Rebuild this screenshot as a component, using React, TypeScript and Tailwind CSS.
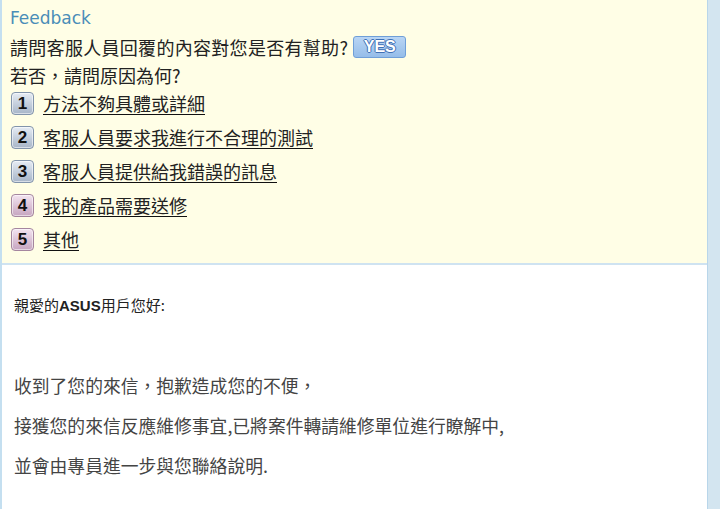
const reasons = [
  { n: 1, text: "方法不夠具體或詳細", tone: "blue" },
  { n: 2, text: "客服人員要求我進行不合理的測試", tone: "blue" },
  { n: 3, text: "客服人員提供給我錯誤的訊息", tone: "blue" },
  { n: 4, text: "我的產品需要送修", tone: "pink" },
  { n: 5, text: "其他", tone: "pink" },
];

function NumberBadge({ n, tone }: { n: number; tone: string }) {
  const cls =
    tone === "blue"
      ? "border-[#8294ab] bg-gradient-to-b from-[#e6ecf4] to-[#a7b5c8]"
      : "border-[#a5869f] bg-gradient-to-b from-[#f3e4f0] to-[#c6a5c0]";
  return (
    <span
      className={`grid h-[23px] w-[23px] place-items-center rounded-[4px] border font-['Liberation_Sans',sans-serif] text-[17px] font-bold leading-none text-[#111] shadow-[inset_0_0_0_1px_rgba(255,255,255,0.55)] ${cls}`}
    >
      {n}
    </span>
  );
}

export default function App() {
  return (
    <div className="flex h-[509px] w-[720px] overflow-hidden bg-[#d3e5f0] font-['Noto_Sans_CJK_TC','Noto_Sans',sans-serif]">
      <div className="flex w-[708px] flex-col border-l-2 border-r border-l-[#c4dff0] border-r-[#b9d6ea]">
        <section className="h-[265px] border-b-2 border-[#cfe3f1] bg-[#fffee6] pl-[8px] pt-[6px]">
          <h2 className="h-[24px] font-['DejaVu_Sans',sans-serif] text-[17px] leading-[24px] text-[#4a8db8]">Feedback</h2>
          <div className="mt-[3px] flex h-[28px] items-center gap-[5px] text-[18px] text-[#222]">
            <span className="tracking-[0.3px]">請問客服人員回覆的內容對您是否有幫助?</span>
            <button
              type="button"
              className="h-[22px] w-[53px] rounded-[3px] border border-[#6f9fd8] bg-gradient-to-b from-[#b9d5f4] to-[#95bde9] font-['Liberation_Sans',sans-serif] text-[16px] font-bold leading-none text-white [text-shadow:1px_0_0_#3f70b5,-1px_0_0_#3f70b5,0_1px_0_#3f70b5,0_-1px_0_#3f70b5]"
            >
              YES
            </button>
          </div>
          <p className="flex h-[28px] items-center text-[18px] text-[#222]">若否，請問原因為何?</p>
          <ul className="flex flex-col gap-[6px]">
            {reasons.map((r) => (
              <li key={r.n} className="flex h-[28px] items-center gap-[9px] pl-[1px]">
                <NumberBadge n={r.n} tone={r.tone} />
                <a className="text-[18px] leading-[22px] text-[#222] underline decoration-[#111] underline-offset-[3px]">
                  {r.text}
                </a>
              </li>
            ))}
          </ul>
        </section>
        <section className="flex-1 bg-white pl-[12px] pt-[30px]">
          <p className="text-[15px] leading-[20px] text-[#222]">
            親愛的<span className="font-['Liberation_Sans',sans-serif] font-bold">ASUS</span>用戶您好:
          </p>
          <div className="mt-[57px] flex flex-col gap-[16px] text-[17.8px] leading-[24px] text-[#444]">
            <p>收到了您的來信，抱歉造成您的不便，</p>
            <p>接獲您的來信反應維修事宜,已將案件轉請維修單位進行瞭解中,</p>
            <p>並會由專員進一步與您聯絡說明.</p>
          </div>
        </section>
      </div>
    </div>
  );
}
